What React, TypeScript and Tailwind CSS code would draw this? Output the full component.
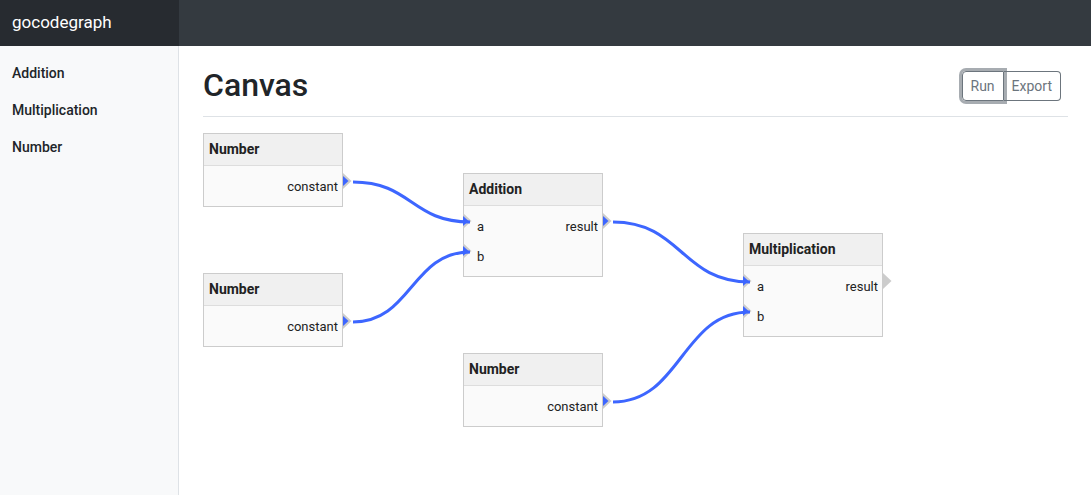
import type { ReactNode } from "react";

type Port = { name: string; connected: boolean };

interface NodeDef {
  id: string;
  title: string;
  x: number;
  y: number;
  inputs: Port[];
  outputs: Port[];
}

const nodes: NodeDef[] = [
  { id: "n1", title: "Number", x: 0, y: 16, inputs: [], outputs: [{ name: "constant", connected: true }] },
  { id: "n2", title: "Number", x: 0, y: 156, inputs: [], outputs: [{ name: "constant", connected: true }] },
  {
    id: "add",
    title: "Addition",
    x: 260,
    y: 56,
    inputs: [
      { name: "a", connected: true },
      { name: "b", connected: true },
    ],
    outputs: [{ name: "result", connected: true }],
  },
  {
    id: "mul",
    title: "Multiplication",
    x: 540,
    y: 116,
    inputs: [
      { name: "a", connected: true },
      { name: "b", connected: true },
    ],
    outputs: [{ name: "result", connected: false }],
  },
  { id: "n3", title: "Number", x: 260, y: 236, inputs: [], outputs: [{ name: "constant", connected: true }] },
];

// edge endpoints relative to the canvas origin
const edges: [number, number, number, number][] = [
  [150, 65, 267, 105],
  [150, 205, 267, 135],
  [410, 105, 547, 165],
  [410, 285, 547, 195],
];

function Triangle({ connected }: { connected: boolean }) {
  return (
    <svg width="9" height="16" viewBox="0 0 9 16" className="block">
      <polygon points="0,0 8.5,8 0,16" fill="#cccccc" />
      {connected && <polygon points="0,3 5.5,8 0,13" fill="#3d66ff" />}
    </svg>
  );
}

function PortRow({ children, right }: { children: ReactNode; right?: Port }) {
  return (
    <div className="relative h-[30px] flex items-center">
      {children}
      {right && (
        <div className="absolute right-[-10px] top-[1px]">
          <Triangle connected={right.connected} />
        </div>
      )}
    </div>
  );
}

function GraphNode({ node }: { node: NodeDef }) {
  const rows = Math.max(node.inputs.length, node.outputs.length);
  return (
    <div
      className="absolute w-[140px] border border-[#cccccc] bg-[#fafafa]"
      style={{ left: node.x, top: node.y }}
    >
      <div className="h-[32px] flex items-center px-[5px] bg-[#f0f0f0] border-b border-[#dddddd] text-[14px] font-bold text-[#222]">
        {node.title}
      </div>
      <div className="pt-[6px] pb-[4px]">
        {Array.from({ length: rows }).map((_, i) => {
          const inp = node.inputs[i];
          const out = node.outputs[i];
          return (
            <PortRow key={i} right={out}>
              {inp && (
                <>
                  <div className="absolute left-[-1px] top-[1px]">
                    <Triangle connected={inp.connected} />
                  </div>
                  <span className="pl-[13px] text-[13px] text-[#222]">{inp.name}</span>
                </>
              )}
              {out && <span className="ml-auto pr-[4px] text-[13px] text-[#222]">{out.name}</span>}
            </PortRow>
          );
        })}
      </div>
    </div>
  );
}

export default function App() {
  return (
    <div className="h-[495px] flex flex-col bg-white text-[#212529]" style={{ fontFamily: "Roboto, 'Liberation Sans', sans-serif" }}>
      <nav className="h-[46px] flex shrink-0 bg-[#343a40]">
        <div className="w-[179px] flex items-center pl-[12px] bg-[#272b30] text-[17px] text-white">gocodegraph</div>
      </nav>
      <div className="flex flex-1 min-h-0">
        <aside className="w-[179px] shrink-0 bg-[#f8f9fa] border-r border-[#dee2e6] pt-[18px] pl-[12px] flex flex-col gap-[19px] text-[14px] font-medium text-[#212529]">
          <div className="leading-[18px]">Addition</div>
          <div className="leading-[18px]">Multiplication</div>
          <div className="leading-[18px]">Number</div>
        </aside>
        <main className="flex-1 pl-[24px] pr-[23px]">
          <div className="flex items-center justify-between pt-[24px] pb-[15px] border-b border-[#dee2e6]">
            <h1 className="text-[32px] font-medium leading-[31px]">Canvas</h1>
            <div className="flex mr-[7px] mt-[1px]">
              <button className="h-[30px] px-[8px] border border-[#6c757d] rounded-l-[4px] text-[14px] text-[#6c757d] ring-[3px] ring-[#6c757d]/60 relative z-10">
                Run
              </button>
              <button className="h-[30px] px-[8px] border border-l-0 border-[#6c757d] rounded-r-[4px] text-[14px] text-[#6c757d]">
                Export
              </button>
            </div>
          </div>
          <div className="relative h-[360px]">
            {nodes.map((n) => (
              <GraphNode key={n.id} node={n} />
            ))}
            <svg className="absolute left-0 top-0 pointer-events-none" width="880" height="360">
              {edges.map(([x1, y1, x2, y2], i) => {
                const c = (x2 - x1) / 2;
                return (
                  <path
                    key={i}
                    d={`M ${x1} ${y1} C ${x1 + c} ${y1}, ${x2 - c} ${y2}, ${x2} ${y2}`}
                    fill="none"
                    stroke="#3d66ff"
                    strokeWidth="3"
                  />
                );
              })}
            </svg>
          </div>
        </main>
      </div>
    </div>
  );
}
